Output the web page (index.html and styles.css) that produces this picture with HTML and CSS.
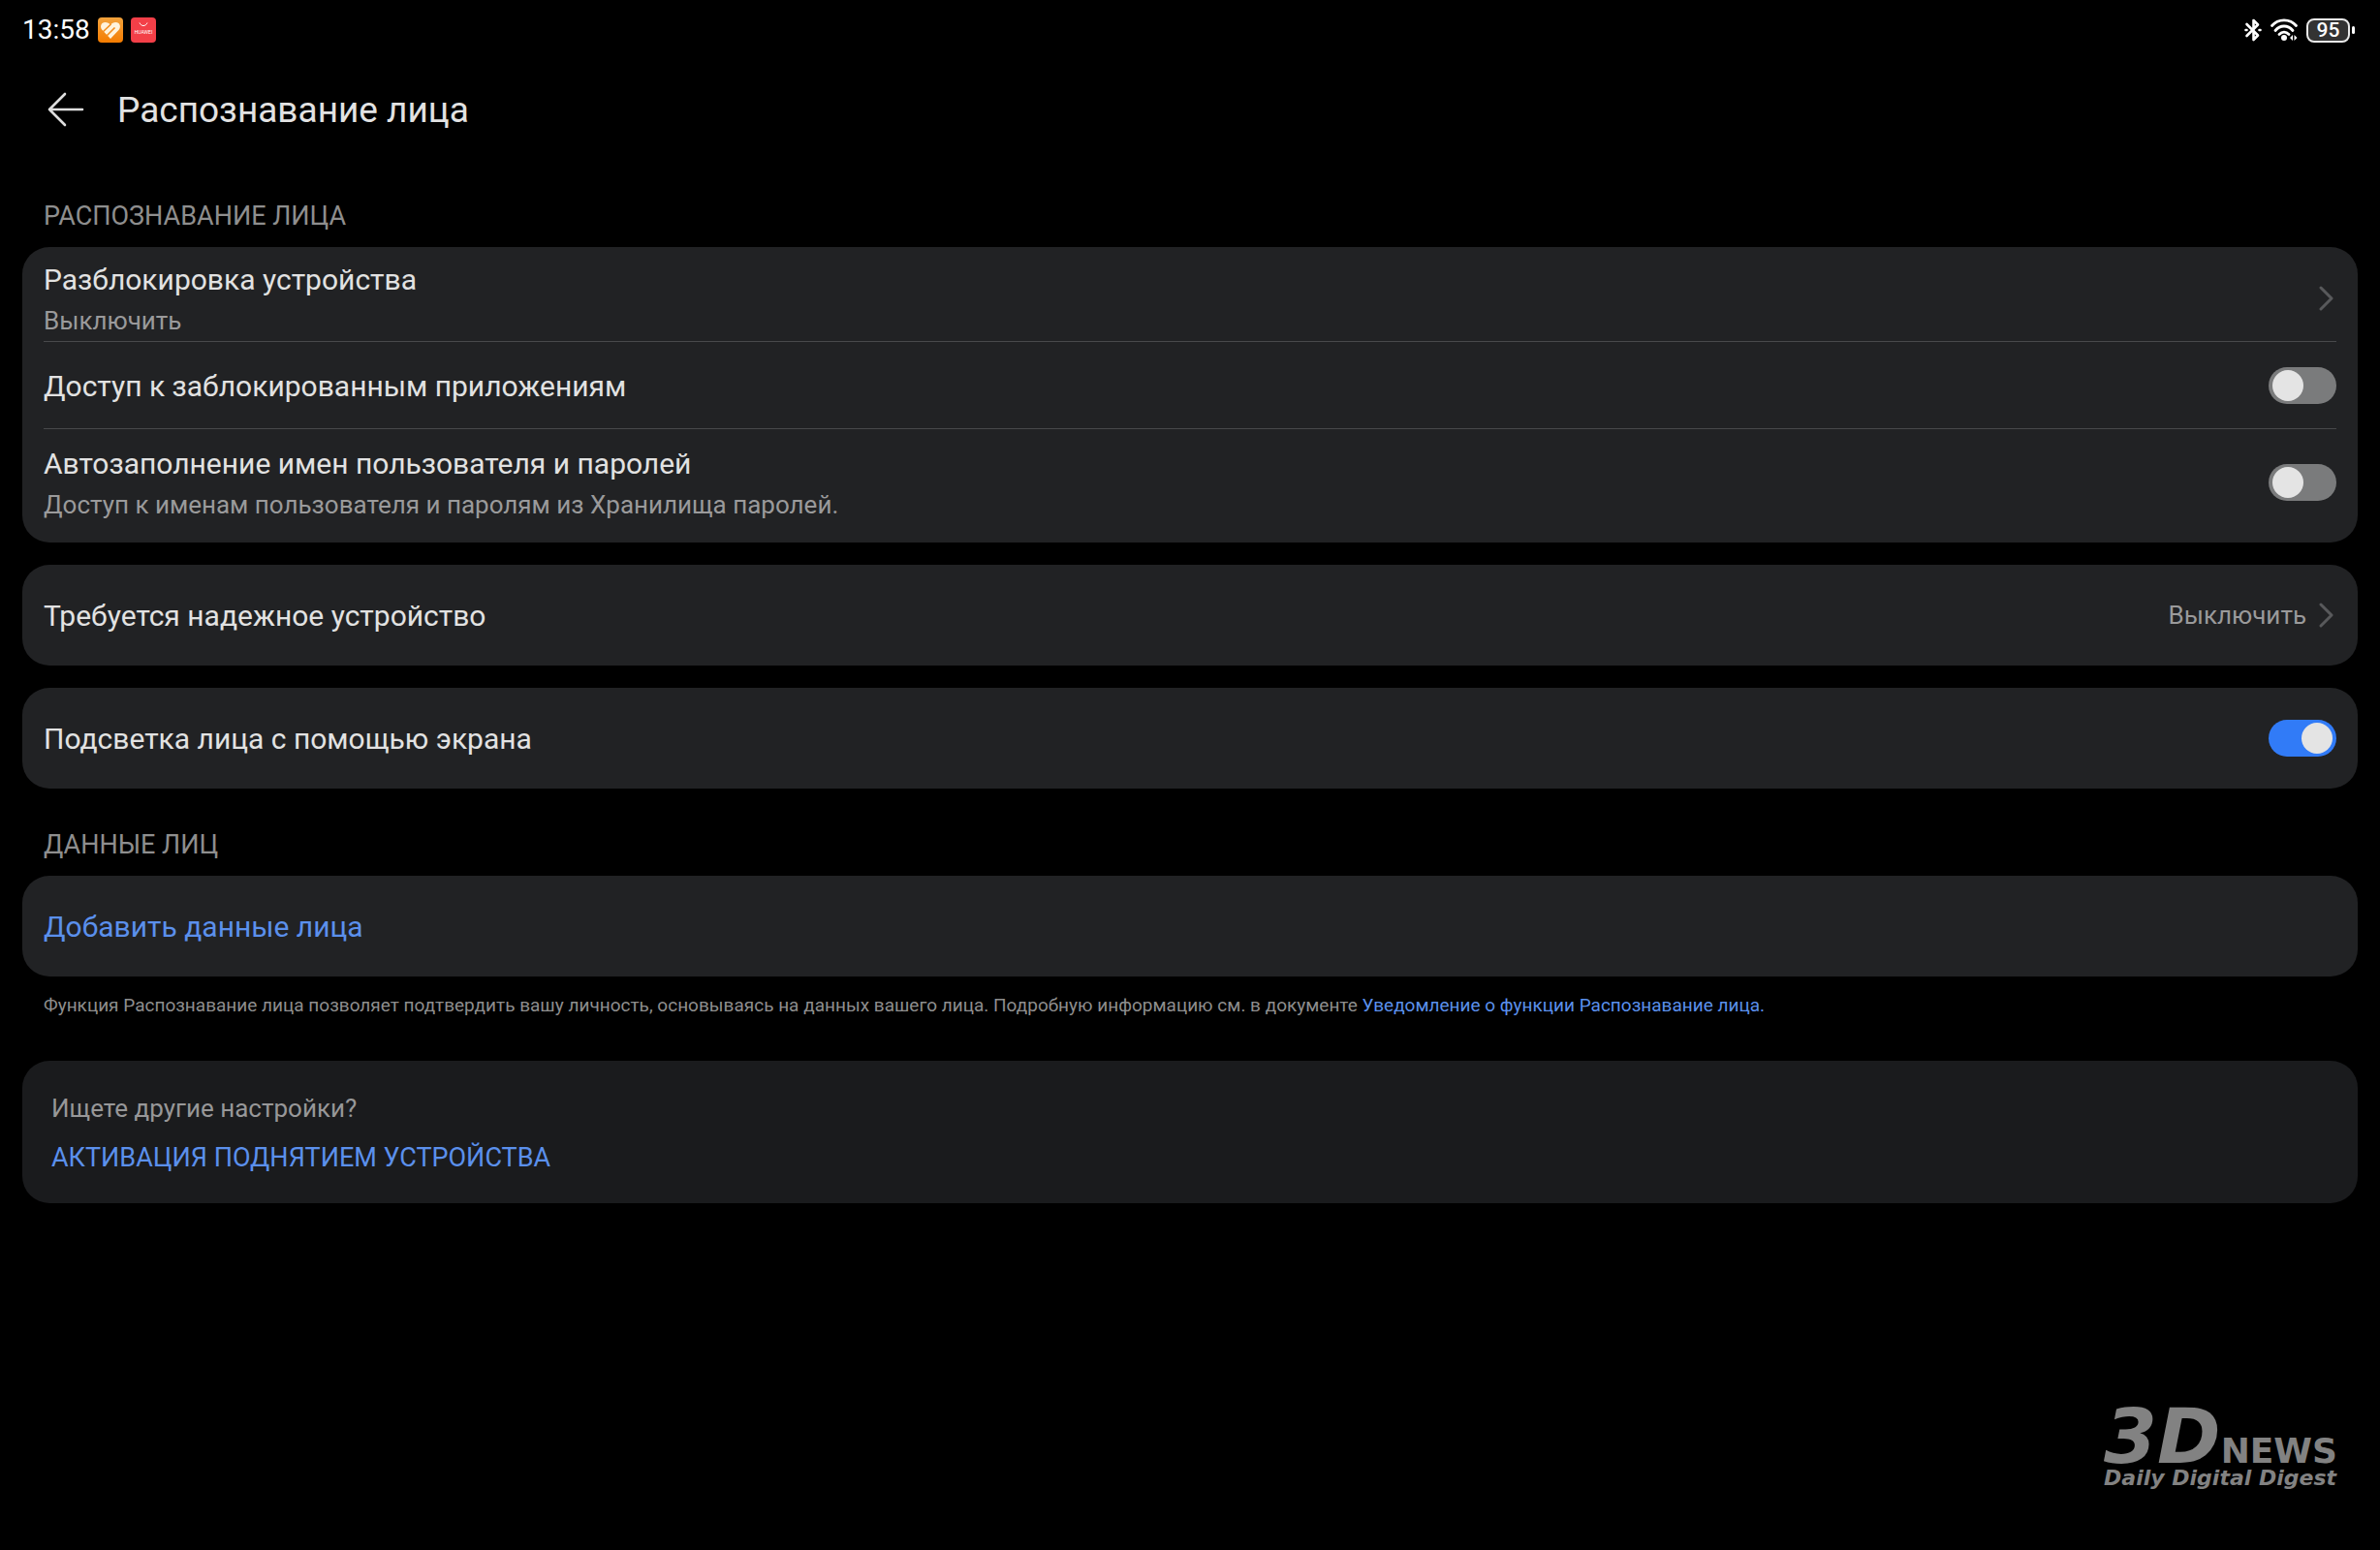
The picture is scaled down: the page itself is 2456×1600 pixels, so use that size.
FILE: index.html
```html
<!DOCTYPE html>
<html lang="ru">
  <head>
    <meta charset="UTF-8" />
    <meta name="viewport" content="width=device-width, initial-scale=1.0" />
    <title>Распознавание лица</title>
    <link rel="stylesheet" href="styles.css">
  </head>
  <body>
    <div class="status-bar">
      <div class="status-left">
        <span class="time">13:58</span>
        <svg class="app-icon" viewBox="0 0 26 26">
          <defs>
            <linearGradient id="health" x1="0" y1="0" x2="0" y2="1">
              <stop offset="0" stop-color="#f2a23c" />
              <stop offset="1" stop-color="#f57c00" />
            </linearGradient>
          </defs>
          <rect width="26" height="26" rx="4" fill="url(#health)" />
          <path d="M13 22L4.500 13C1.500 9.500 3.500 5 7.500 5C10 5 11.500 6 13 7.500C14.500 6 16 5 18.500 5C22.500 5 24.500 9.500 21.500 13Z" fill="#fff3dc" />
          <path d="M4 16L13.500 7M8.500 19.500L17.500 10.500" fill="none" stroke="#f38d1c" stroke-width="1.600" />
        </svg>
        <svg class="app-icon" viewBox="0 0 26 26">
          <rect width="26" height="26" rx="4" fill="#f33f48" />
          <path d="M9 5.500C10.500 9.500 15.500 9.500 17 5.500" fill="none" stroke="#fff" stroke-width="1" />
          <text class="app-name" x="13" y="17" text-anchor="middle">HUAWEI</text>
        </svg>
      </div>
      <div class="status-right">
        <svg class="bluetooth" viewBox="0 0 18 26" fill="none" stroke="#fff" stroke-width="2.600" stroke-linejoin="round" stroke-linecap="round">
          <path d="M2.500 7L14 18.500L9.500 23V3L14 7.500L2.500 19" />
          <path d="M1.500 13H2.500M15.500 13H16.500" />
        </svg>
        <svg class="wifi" viewBox="0 0 30 26">
          <g fill="none" stroke="#fff" stroke-width="2.800" stroke-linecap="round">
            <path d="M2.500 8.500C9 1 21 1 27.500 8.500" />
            <path d="M6 13.500C11 7.500 19 7.500 24 13.500" />
            <path d="M10 17.500C13 14.500 17 14.500 20 17.500" />
          </g>
          <circle cx="15" cy="21" r="3" fill="#fff" />
          <path d="M24 18V24L21 21ZM25.500 18L28.500 21L25.500 24Z" fill="#fff" />
        </svg>
        <div class="battery"><span class="battery-level">95</span></div>
      </div>
    </div>

    <header class="header">
      <button class="back" type="button" aria-label="Назад">
        <svg class="back-icon" viewBox="0 0 38 36" fill="none" stroke="#dedede" stroke-width="2.600" stroke-linecap="round" stroke-linejoin="round">
          <path d="M18 2L2 18L18 34M2 18H36" />
        </svg>
      </button>
      <h1 class="title">Распознавание лица</h1>
    </header>

    <main class="content">
      <h2 class="section-title">РАСПОЗНАВАНИЕ ЛИЦА</h2>
      <div class="cards">
        <div class="card">
          <button class="row" type="button">
            <span class="row-text">
              <span class="label">Разблокировка устройства</span>
              <span class="sub">Выключить</span>
            </span>
            <svg class="chevron" viewBox="0 0 16 26"><path d="M2 2L13 13L2 24" /></svg>
          </button>
          <label class="row">
            <span class="label">Доступ к заблокированным приложениям</span>
            <input class="switch" type="checkbox" />
          </label>
          <label class="row row-tall">
            <span class="row-text">
              <span class="label">Автозаполнение имен пользователя и паролей</span>
              <span class="sub">Доступ к именам пользователя и паролям из Хранилища паролей.</span>
            </span>
            <input class="switch" type="checkbox" />
          </label>
        </div>
        <div class="card">
          <button class="row" type="button">
            <span class="label">Требуется надежное устройство</span>
            <span class="row-value">
              <span class="sub">Выключить</span>
              <svg class="chevron" viewBox="0 0 16 26"><path d="M2 2L13 13L2 24" /></svg>
            </span>
          </button>
        </div>
        <div class="card">
          <label class="row">
            <span class="label">Подсветка лица с помощью экрана</span>
            <input class="switch" type="checkbox" checked />
          </label>
        </div>
      </div>

      <h2 class="section-title">ДАННЫЕ ЛИЦ</h2>
      <div class="card">
        <button class="row" type="button">
          <span class="label accent">Добавить данные лица</span>
        </button>
      </div>
      <p class="note">Функция Распознавание лица позволяет подтвердить вашу личность, основываясь на данных вашего лица. Подробную информацию см. в документе <a class="accent" href="#">Уведомление о функции Распознавание лица.</a></p>

      <div class="card more">
        <p class="more-title">Ищете другие настройки?</p>
        <a class="accent" href="#">АКТИВАЦИЯ ПОДНЯТИЕМ УСТРОЙСТВА</a>
      </div>
    </main>

    <footer class="footer">
      <div class="logo">
        <div class="logo-top"><span class="logo-3d">3D</span><span class="logo-news">NEWS</span></div>
        <div class="logo-tagline">Daily Digital Digest</div>
      </div>
    </footer>
  </body>
</html>
```
FILE: styles.css
```css
* {
  margin: 0;
  padding: 0;
  box-sizing: border-box;
}
body {
  display: flex;
  flex-direction: column;
  min-height: 100vh;
  background: #000;
  color: #e2e2e2;
  font-family: Roboto, "Noto Sans", sans-serif;
  font-size: 27px;
  line-height: 36px;
}
button {
  border: none;
  background: none;
  color: inherit;
  font: inherit;
  text-align: left;
  cursor: pointer;
}
a {
  text-decoration: none;
}
svg {
  display: block;
  flex: none;
}

/* status bar */
.status-bar {
  display: flex;
  align-items: center;
  justify-content: space-between;
  height: 62px;
  padding: 0 26px 0 23px;
  color: #fff;
}
.status-left,
.status-right {
  display: flex;
  align-items: center;
  gap: 8px;
}
.time {
  font-size: 28px;
}
.app-icon {
  width: 26px;
  height: 26px;
}
.app-name {
  fill: #fff;
  font-size: 5px;
}
.bluetooth {
  width: 18px;
  height: 26px;
}
.wifi {
  width: 30px;
  height: 26px;
}
.battery {
  display: flex;
  align-items: center;
  gap: 2px;
}
.battery-level {
  width: 45px;
  height: 25px;
  border: 2px solid #e8e8e8;
  border-radius: 8px;
  background: #333;
  font-size: 21px;
  font-weight: 500;
  line-height: 21px;
  text-align: center;
}
.battery::after {
  content: "";
  width: 3px;
  height: 8px;
  border-radius: 2px;
  background: #fff;
}

/* header */
.header {
  display: flex;
  align-items: center;
  gap: 34px;
  height: 102px;
  padding: 0 49px;
}
.back-icon {
  width: 38px;
  height: 36px;
}
.title {
  padding-top: 2px;
  font-size: 37px;
  font-weight: 400;
  line-height: 48px;
}

/* settings list */
.content {
  padding: 1px 23px 0;
}
.section-title {
  margin: 40px 22px 14px;
  color: #8e8e8e;
  font-size: 27px;
  font-weight: 400;
}
.cards {
  display: flex;
  flex-direction: column;
  gap: 23px;
}
.card {
  padding: 8px 22px;
  border-radius: 28px;
  background: #212224;
}
.row {
  display: flex;
  align-items: center;
  justify-content: space-between;
  width: 100%;
  min-height: 90px;
  border-bottom: 1px solid #48494b;
}
.row:last-child {
  min-height: 88px;
  border-bottom: none;
}
.row-tall:last-child {
  min-height: 109px;
}
.row-text {
  display: flex;
  flex-direction: column;
}
.label {
  font-size: 30px;
  line-height: 46px;
}
.row > .label {
  padding-top: 2px;
}
.sub {
  color: #9a9a9b;
  font-size: 26px;
  line-height: 38px;
}
.row-value {
  display: flex;
  align-items: center;
  gap: 13px;
}
.chevron {
  width: 16px;
  height: 26px;
  margin-right: 2px;
  fill: none;
  stroke: #58595b;
  stroke-width: 3;
  stroke-linecap: round;
  stroke-linejoin: round;
}
.switch {
  appearance: none;
  flex: none;
  width: 70px;
  height: 38px;
  padding: 3px 4px;
  border-radius: 19px;
  background: #7a7b7c;
  cursor: pointer;
}
.switch::before {
  content: "";
  display: block;
  width: 32px;
  height: 32px;
  border-radius: 50%;
  background: #e4e4e4;
}
.switch:checked {
  background: #317bf7;
}
.switch:checked::before {
  margin-left: auto;
}
.accent {
  color: #5b90ec;
}
.note {
  margin: 16px 22px 43px;
  color: #8e8e8e;
  font-size: 19px;
  line-height: 28px;
}
.more {
  display: flex;
  flex-direction: column;
  align-items: flex-start;
  gap: 15px;
  padding: 31px 30px 29px;
  background: #1a1b1d;
}
.more-title {
  color: #979798;
  font-size: 26px;
}

/* logo */
.footer {
  display: flex;
  justify-content: flex-end;
  margin-top: auto;
  padding: 0 44px 62px;
}
.logo {
  color: #828282;
  font-family: "DejaVu Sans", sans-serif;
  font-weight: 700;
}
.logo-top {
  display: flex;
  align-items: baseline;
}
.logo-3d {
  font-size: 79px;
  font-style: italic;
  line-height: 60px;
}
.logo-news {
  font-size: 36px;
  line-height: 32px;
}
.logo-tagline {
  font-size: 22px;
  font-style: italic;
  line-height: 24px;
}
```
